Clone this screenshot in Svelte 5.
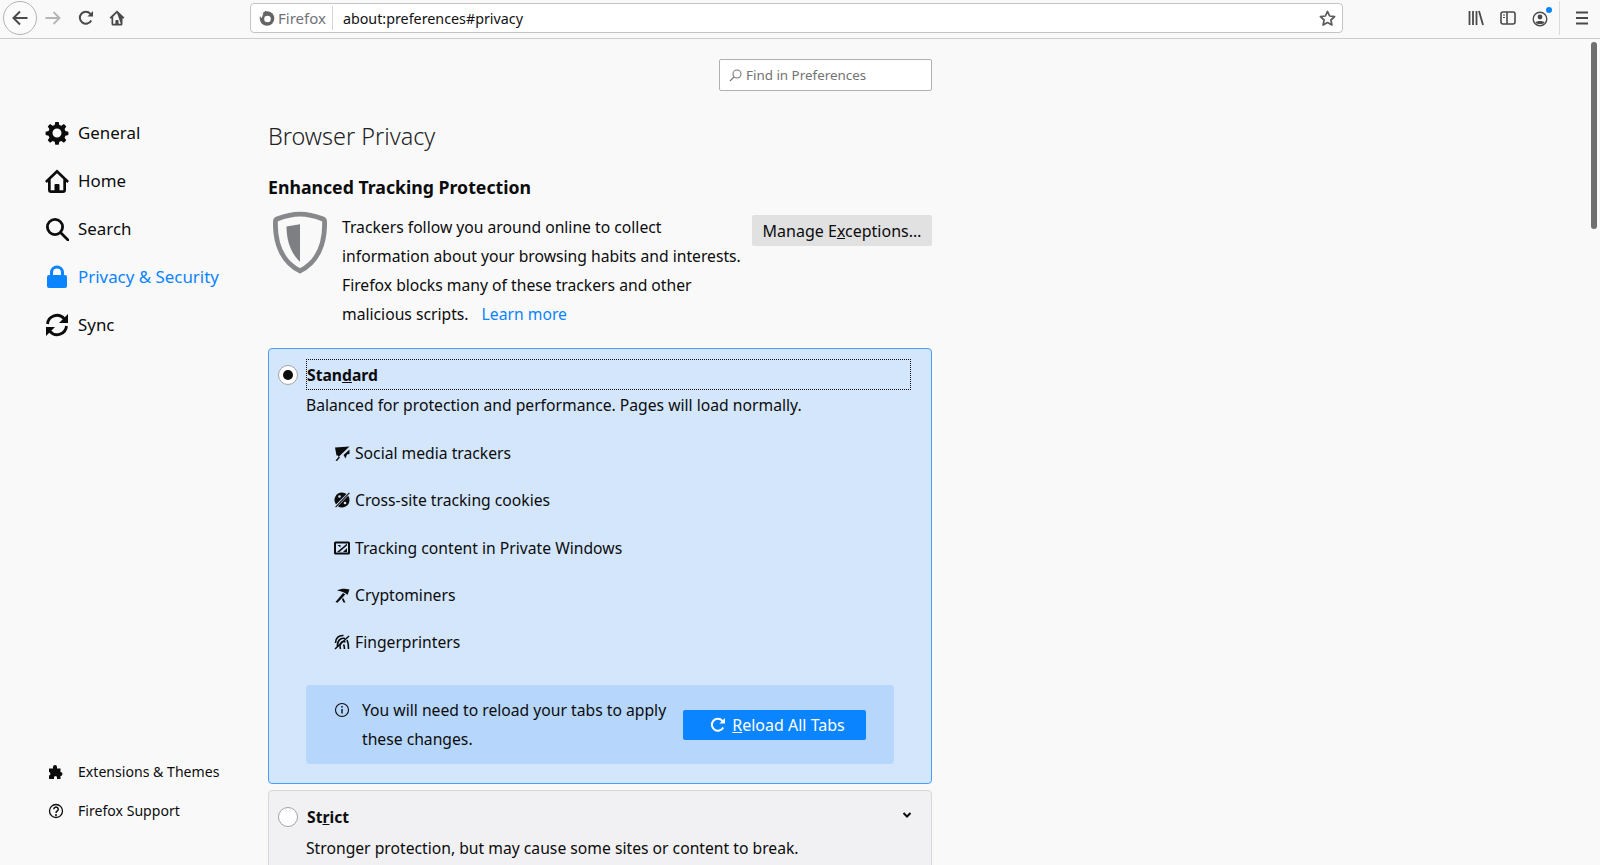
<script>
  const navTop = ['General', 'Home', 'Search', 'Privacy & Security', 'Sync'];
  const trackers = [
    { id: 'social', label: 'Social media trackers' },
    { id: 'cookie', label: 'Cross-site tracking cookies' },
    { id: 'content', label: 'Tracking content in Private Windows' },
    { id: 'miner', label: 'Cryptominers' },
    { id: 'finger', label: 'Fingerprinters' }
  ];
</script>

<div class="window">
  <header class="toolbar">
    <div class="nav-buttons">
      <div class="back">
        <svg width="18" height="18" viewBox="0 0 18 18" fill="none" stroke="#4c4a48" stroke-width="2"><path d="M16.5 9H2.5M9 2.5 2.5 9 9 15.5" /></svg>
      </div>
      <svg class="tb forward" width="16" height="16" viewBox="0 0 16 16" fill="none" stroke="#b5b4b3" stroke-width="1.8"><path d="M0.5 8H14.5M8.5 2 14.5 8 8.5 14" /></svg>
      <svg class="tb reload" width="16" height="16" viewBox="0 0 16 16" fill="none" stroke="#4c4a48" stroke-width="2"><path d="M13.2 10.5A6 6 0 1 1 12.4 3.8L14 5.5" /><path d="M15 1v5.6H9.4z" fill="#4c4a48" stroke="none" /></svg>
      <svg class="tb home" width="16" height="16" viewBox="0 0 16 16" fill="#4c4a48"><path fill-rule="evenodd" d="M8 .5 0.6 7.6l1.2 1.2.7-.6V14a1.500 1.500 0 0 0 1.500 1.500h8A1.500 1.500 0 0 0 13.500 14V8.200l.7.6 1.200-1.200zM11.800 13.800H9.600V11a1 1 0 0 0-1-1H7.400a1 1 0 0 0-1 1v2.800H4.200V6.800L8 3z" /></svg>
    </div>
    <div class="urlbar">
      <div class="identity">
        <svg width="16" height="16" viewBox="0 0 16 16"><circle cx="8" cy="8.500" r="7.300" fill="#646464" /><circle cx="8.500" cy="9" r="3.300" fill="#fff" /><path d="M6 .5 10 4.500 6 5z" fill="#646464" /><path d="M0.500 4.500 4.500 2.500 3 7.500 2 8z" fill="#fff" /></svg>
        <span>Firefox</span>
      </div>
      <span class="url">about:preferences#privacy</span>
      <svg class="star" width="17" height="17" viewBox="0 0 17 17" fill="none" stroke="#5b5b5b" stroke-width="1.700" stroke-linejoin="round"><path d="M8.500 1.400 10.600 6l5 .6-3.700 3.400 1 5-4.400-2.500L4.100 15l1-5L1.400 6.600l5-.6z" /></svg>
    </div>
    <div class="right-icons">
      <svg width="16" height="16" viewBox="0 0 16 16" fill="none" stroke="#4c4a48" stroke-width="1.800"><path d="M1.500 1v14M5 1v14M8.500 1v14M11 1l4 14" /></svg>
      <svg width="16" height="16" viewBox="0 0 16 16" fill="none" stroke="#4c4a48" stroke-width="1.600"><rect x="1" y="2" width="14" height="12" rx="2" /><path d="M7 2v12" /><path d="M3 5h2M3 7.500h2" stroke-width="1" /></svg>
      <div class="account">
        <svg width="16" height="16" viewBox="0 0 16 16" fill="none" stroke="#4c4a48" stroke-width="1.400"><circle cx="8" cy="8" r="6.800" /><circle cx="8" cy="6" r="2.400" fill="#4c4a48" stroke="none" /><path d="M3.500 11.500c1-2 8-2 9 0-1 2-8 2-9 0z" fill="#4c4a48" stroke="none" /></svg>
        <span class="dot"></span>
      </div>
      <span class="sep"></span>
      <svg width="16" height="16" viewBox="0 0 16 16" fill="none" stroke="#4c4a48" stroke-width="1.800"><path d="M2 2.500h12M2 8h12M2 13.500h12" /></svg>
    </div>
  </header>

  <div class="content">
    <aside class="sidebar">
      <nav class="nav-main">
        {#each navTop as item, i}
          <div class="nav-item" class:active={item === 'Privacy & Security'}>
            <span class="nav-icon">
              {#if i === 0}
                <svg width="24" height="24" viewBox="0 0 24 24" fill="#0c0c0d"><path fill-rule="evenodd" d="M10.300 1h3.400l.6 3 2 .8 2.600-1.700 2.400 2.400-1.700 2.600.8 2 3 .6v3.400l-3 .6-.8 2 1.700 2.600-2.400 2.400-2.600-1.700-2 .8-.6 3h-3.400l-.6-3-2-.8-2.600 1.700-2.400-2.400 1.700-2.600-.8-2-3-.6v-3.400l3-.6.8-2-1.700-2.600 2.400-2.400 2.600 1.700 2-.8zM12 7.500a4.500 4.500 0 1 0 0 9 4.500 4.500 0 0 0 0-9z" /></svg>
              {:else if i === 1}
                <svg width="24" height="24" viewBox="0 0 24 24" fill="#0c0c0d"><path fill-rule="evenodd" d="M12 .5 0 12l1.800 1.900L3 12.800V21a3 3 0 0 0 3 3h12a3 3 0 0 0 3-3v-8.200l1.200 1.100L24 12zM18.300 21.300h-3.800V16a1 1 0 0 0-1-1h-3a1 1 0 0 0-1 1v5.300H5.700V10.300L12 4.200l6.300 6.100z" /></svg>
              {:else if i === 2}
                <svg width="24" height="24" viewBox="0 0 24 24" fill="none" stroke="#0c0c0d" stroke-width="2.800"><circle cx="10" cy="10" r="7.600" /><path d="M15.500 15.500 23 23" stroke-linecap="round" /></svg>
              {:else if i === 3}
                <svg width="24" height="24" viewBox="0 0 24 24" fill="#0a84ff"><path fill-rule="evenodd" d="M12 .5a7 7 0 0 0-7 7V10H4a2 2 0 0 0-2 2v9a2 2 0 0 0 2 2h16a2 2 0 0 0 2-2v-9a2 2 0 0 0-2-2h-1V7.500a7 7 0 0 0-7-7zM8 10V7.500a4 4 0 0 1 8 0V10z" /></svg>
              {:else}
                <svg width="24" height="24" viewBox="0 0 24 24" fill="none" stroke="#0c0c0d" stroke-width="2.800"><path d="M2.500 11A9.500 9.500 0 0 1 19 5.500L22 8" /><path d="M21.500 13A9.500 9.500 0 0 1 5 18.500L2 16" /><path d="M23 1v9h-9z" fill="#0c0c0d" stroke="none" /><path d="M1 23v-9h9z" fill="#0c0c0d" stroke="none" /></svg>
              {/if}
            </span>
            <span>{item}</span>
          </div>
        {/each}
      </nav>
      <nav class="nav-bottom">
        <div class="nav-small">
          <span class="small-icon">
            <svg width="16" height="16" viewBox="0 0 16 16" fill="#0c0c0d"><path d="M1 4.500h4V3a2 2 0 0 1 4 0v1.500h3.500V8a2 2 0 0 1 0 4v3H9v-1.500a1.500 1.500 0 0 0-3 0V15H1v-3.500a1.800 1.800 0 0 0 0-3.500z" /></svg>
          </span>
          <span>Extensions &amp; Themes</span>
        </div>
        <div class="nav-small">
          <span class="small-icon">
            <svg width="16" height="16" viewBox="0 0 16 16" fill="none" stroke="#0c0c0d" stroke-width="1.300"><circle cx="8" cy="8" r="6.500" /><path d="M5.800 6.200a2.200 2.200 0 1 1 3.300 2C8.300 8.700 8 9 8 10" stroke-width="1.500" /><circle cx="8" cy="12" r="1" fill="#0c0c0d" stroke="none" /></svg>
          </span>
          <span>Firefox Support</span>
        </div>
      </nav>
    </aside>

    <main class="main">
      <div class="search">
        <svg width="13" height="13" viewBox="0 0 13 13" fill="none" stroke="#777" stroke-width="1.100"><circle cx="8" cy="5" r="4" /><path d="M5 8 1 12" /></svg>
        <span>Find in Preferences</span>
      </div>

      <h1>Browser Privacy</h1>
      <h2>Enhanced Tracking Protection</h2>

      <div class="intro">
        <svg class="shield" width="54" height="63" viewBox="0 0 56 64" fill="none"><path d="M28 2.500C20 2.500 11 5 4.500 7.500 3 8 2.500 9 2.500 10.500 2 32 9 52 28 61.500 47 52 54 32 53.500 10.500c0-1.500-.5-2.500-2-3C45 5 36 2.500 28 2.500z" stroke="#87888b" stroke-width="5" /><path d="M28 13 14 15.500C14 29 18 43 28 52z" fill="#7e7f83" /></svg>
        <p>Trackers follow you around online to collect information about your browsing habits and interests. Firefox blocks many of these trackers and other malicious scripts. <a href="#privacy">Learn more</a></p>
        <button class="btn-manage" type="button">Manage E<u>x</u>ceptions…</button>
      </div>

      <section class="card selected">
        <div class="card-head">
          <span class="radio on"></span>
          <div class="label-focus"><b>Stan<u>d</u>ard</b></div>
        </div>
        <p class="desc">Balanced for protection and performance. Pages will load normally.</p>
        <ul class="trackers">
          {#each trackers as t}
            <li>
              <svg width="16" height="16" viewBox="0 0 16 16" fill="#0c0c0d">
                {#if t.id === 'social'}
                  <path d="M1 2.500 15.500 1.500 4.500 12 4 10.500H2.500z" /><path d="M15.500 4.500V9l-2.500.5-1.500 4-2-3.500z" /><path d="M1.500 15.500 5 11.500l1 1-3 3.500z" />
                {:else if t.id === 'cookie'}
                  <path d="M8 .5a7.500 7.500 0 0 0-6 12L12.500 2A7.500 7.500 0 0 0 8 .5z" /><path d="M14.200 3.800 3.800 14.200A7.500 7.500 0 0 0 15.500 8a7.500 7.500 0 0 0-1.300-4.200z" /><path d="M15 .5l.8.8L2 15.500l-.8-.8z" /><circle cx="5.500" cy="4.500" r="1.300" fill="#d3e6fc" /><circle cx="11" cy="11" r="1.300" fill="#d3e6fc" />
                {:else if t.id === 'content'}
                  <path fill-rule="evenodd" d="M0 3a1.500 1.500 0 0 1 1.500-1.500h13A1.500 1.500 0 0 1 16 3v10a1.500 1.500 0 0 1-1.500 1.500h-13A1.500 1.500 0 0 1 0 13zm2 .5v9h12v-9z" /><path d="M3 12 13 3.500v2L5.500 12z" /><path d="M3.500 5h3v2.500z" /><path d="M13 8v4H9z" />
                {:else if t.id === 'miner'}
                  <path d="M3 3.500C7 1.500 11 1.500 15.500 2.500L13.500 8C11.500 5.500 8 4.500 3 3.500z" /><path d="M1.500 15 9 6l2.300 1.500L3.500 15.800z" /><path d="M9 10.500l2.500 5H9.500L8 12.500z" />
                {:else}
                  <g fill="none" stroke="#0c0c0d" stroke-width="1.600"><path d="M1.500 9C1.500 4 5 1 9.500 1.500" /><path d="M3.500 13C3 7 6 3.500 11 4.500" /><path d="M6.500 15C5 9 8 6.500 11.500 8M14.500 15c0-3 0-6-1.500-9M10.500 15c0-2 0-3-1-4.500" /><path d="M1 15 15 2" stroke-width="1.500" /></g>
                {/if}
              </svg>
              <span>{t.label}</span>
            </li>
          {/each}
        </ul>
        <div class="reload-box">
          <svg class="info" width="16" height="16" viewBox="0 0 16 16" fill="none" stroke="#0c0c0d" stroke-width="1.100"><circle cx="8" cy="8" r="6.500" /><path d="M8 7v4.500" stroke-width="1.400" /><circle cx="8" cy="4.800" r=".9" fill="#0c0c0d" stroke="none" /></svg>
          <p>You will need to reload your tabs to apply these changes.</p>
          <button class="btn-reload" type="button">
            <svg width="16" height="16" viewBox="0 0 16 16" fill="none" stroke="#fff" stroke-width="2"><path d="M13.200 10.500A6 6 0 1 1 12.400 3.800L14 5.500" /><path d="M15 1v5.600H9.400z" fill="#fff" stroke="none" /></svg>
            <span><u>R</u>eload All Tabs</span>
          </button>
        </div>
      </section>

      <section class="card plain">
        <div class="card-head">
          <span class="radio"></span>
          <div class="label-plain"><b>St<u>r</u>ict</b></div>
          <svg class="chev" width="12" height="12" viewBox="0 0 12 12" fill="none" stroke="#0c0c0d" stroke-width="2"><path d="M2.500 4 6 7.500 9.500 4" /></svg>
        </div>
        <p class="desc">Stronger protection, but may cause some sites or content to break.</p>
      </section>
    </main>

    <div class="scrollbar"></div>
  </div>
</div>

<style>
  :global(body) {
    margin: 0;
    background: #f9f9fa;
  }
  .window {
    height: 865px;
    overflow: hidden;
    display: flex;
    flex-direction: column;
    font-family: "Noto Sans", "Open Sans", sans-serif;
    font-size: 15.700px;
    color: #0c0c0d;
  }
  .toolbar {
    height: 36px;
    padding-bottom: 2px;
    box-sizing: content-box;
    border-bottom: 1px solid #cccccc;
    background: #f9f9fa;
    display: flex;
    align-items: center;
    flex: none;
  }
  .nav-buttons {
    width: 250px;
    display: flex;
    align-items: center;
    padding-left: 3px;
    box-sizing: border-box;
  }
  .back {
    width: 32px;
    height: 32px;
    border: 1px solid #b3b3b3;
    border-radius: 50%;
    display: flex;
    align-items: center;
    justify-content: center;
    background: #fbfbfb;
  }
  .tb {
    flex: none;
  }
  .forward {
    margin-left: 8px;
  }
  .reload {
    margin-left: 17px;
  }
  .home {
    margin-left: 15px;
  }
  .urlbar {
    width: 1093px;
    height: 30px;
    border: 1px solid #c4c4c4;
    border-radius: 4px;
    background: #fff;
    display: flex;
    align-items: center;
    box-sizing: border-box;
    flex: none;
  }
  .identity {
    display: flex;
    align-items: center;
    gap: 3px;
    padding: 0 6px 0 8px;
    height: 24px;
    border-right: 1px solid #d6d6d6;
    color: #6f7378;
    font-size: 15px;
  }
  .url {
    margin-left: 10px;
    font-size: 14.300px;
    color: #111;
    flex: 1;
  }
  .star {
    margin-right: 6px;
  }
  .right-icons {
    display: flex;
    align-items: center;
    margin-left: 125px;
    gap: 16px;
  }
  .account {
    position: relative;
    height: 16px;
  }
  .dot {
    position: absolute;
    top: -3px;
    right: -4px;
    width: 6px;
    height: 6px;
    border-radius: 50%;
    background: #0a84ff;
  }
  .sep {
    width: 1px;
    height: 34px;
    background: #dcdcdc;
    margin: 0 -2px 0 -5px;
  }
  .content {
    flex: 1;
    display: flex;
    position: relative;
    min-height: 0;
  }
  .sidebar {
    width: 268px;
    flex: none;
    box-sizing: border-box;
    padding: 69px 0 0 45px;
    display: flex;
    flex-direction: column;
    justify-content: space-between;
    height: 826px;
  }
  .nav-main {
    display: flex;
    flex-direction: column;
  }
  .nav-item {
    height: 48px;
    display: flex;
    align-items: center;
    font-size: 16.900px;
  }
  .nav-item.active {
    color: #0a84ff;
  }
  .nav-icon {
    width: 33px;
    display: flex;
    flex: none;
    padding-top: 1px;
  }
  .nav-bottom {
    padding-bottom: 42px;
    display: flex;
    flex-direction: column;
    gap: 14px;
  }
  .nav-small {
    height: 25px;
    display: flex;
    align-items: center;
    font-size: 14.100px;
  }
  .small-icon {
    width: 33px;
    display: flex;
    padding-left: 3px;
    box-sizing: border-box;
    flex: none;
  }
  .main {
    width: 664px;
    flex: none;
    display: flex;
    flex-direction: column;
  }
  .main > * {
    flex: none;
  }
  .search {
    align-self: flex-end;
    width: 213px;
    height: 32px;
    box-sizing: border-box;
    margin-top: 20px;
    border: 1px solid #b1b1b3;
    border-radius: 2px;
    background: #fff;
    display: flex;
    align-items: center;
    gap: 4px;
    padding-left: 9px;
    color: #737373;
    font-size: 13.400px;
  }
  h1 {
    margin: 29px 0 0;
    font-size: 23.400px;
    font-weight: 300;
    line-height: 32px;
    color: #222;
  }
  h2 {
    margin: 23px 0 0;
    font-size: 17.700px;
    font-weight: 700;
    line-height: 24px;
  }
  .intro {
    display: flex;
    align-items: flex-start;
    margin-top: 13.500px;
  }
  .shield {
    margin: -2px 15px 0 5px;
    flex: none;
  }
  .intro p {
    margin: 0;
    width: 410px;
    flex: none;
    line-height: 29.300px;
  }
  .intro a {
    color: #0a84ff;
    text-decoration: none;
    margin-left: 9px;
  }
  .btn-manage {
    margin: 2.500px 0 0 auto;
    width: 180px;
    height: 31px;
    padding: 0;
    border: 0;
    border-radius: 2px;
    background: #e1e1e2;
    color: #0c0c0d;
    font: inherit;
    font-size: 16px;
    white-space: nowrap;
  }
  .card {
    box-sizing: border-box;
    border-radius: 4px;
  }
  .selected {
    margin-top: 18.500px;
    height: 436px;
    background: #d3e6fc;
    border: 1px solid #45a1ff;
    padding: 10px 20px 0 9px;
  }
  .plain {
    margin-top: 6px;
    height: 100px;
    background: #f1f1f3;
    border: 1px solid #d7d7db;
    padding: 10px 20px 0 9px;
  }
  .card-head {
    display: flex;
    align-items: center;
    height: 31px;
    position: relative;
  }
  .radio {
    width: 20px;
    height: 20px;
    box-sizing: border-box;
    border: 1px solid #a3a3a6;
    border-radius: 50%;
    background: #fff;
    flex: none;
    position: relative;
  }
  .radio.on::after {
    content: "";
    position: absolute;
    left: 4px;
    top: 4px;
    width: 10px;
    height: 10px;
    border-radius: 50%;
    background: #0c0c0d;
  }
  .label-focus {
    margin-left: 8px;
    flex: 1;
    height: 31px;
    box-sizing: border-box;
    border: 1px dotted #0c0c0d;
    display: flex;
    align-items: center;
  }
  .label-plain {
    margin-left: 9px;
    flex: 1;
  }
  .chev {
    position: absolute;
    right: -2px;
    top: 8px;
  }
  .desc {
    margin: 2px 0 0 28px;
    line-height: 26px;
    white-space: nowrap;
  }
  .plain .desc {
    margin-top: 3px;
  }
  .trackers {
    list-style: none;
    margin: 11px 0 0 28px;
    padding: 0 0 0 28px;
    display: flex;
    flex-direction: column;
  }
  .trackers li {
    height: 47.400px;
    display: flex;
    align-items: center;
    gap: 5px;
  }
  .reload-box {
    margin: 19px 17px 0 28px;
    height: 79px;
    border-radius: 4px;
    background: #b6d7fb;
    display: flex;
    align-items: center;
    padding-left: 28px;
    box-sizing: border-box;
  }
  .info {
    align-self: flex-start;
    margin-top: 17px;
    flex: none;
  }
  .reload-box p {
    margin: 0 0 0 12px;
    width: 320px;
    line-height: 29px;
    flex: none;
  }
  .btn-reload {
    width: 183px;
    height: 30px;
    margin-left: 1px;
    border: 0;
    padding: 0 0 0 6px;
    border-radius: 2px;
    background: #0a84ff;
    color: #fff;
    font: inherit;
    font-size: 16px;
    display: flex;
    align-items: center;
    justify-content: center;
    gap: 6px;
    flex: none;
  }
  .scrollbar {
    position: absolute;
    right: 3px;
    top: 3px;
    width: 6px;
    height: 187px;
    border-radius: 3px;
    background: #6f6f6f;
  }
</style>
